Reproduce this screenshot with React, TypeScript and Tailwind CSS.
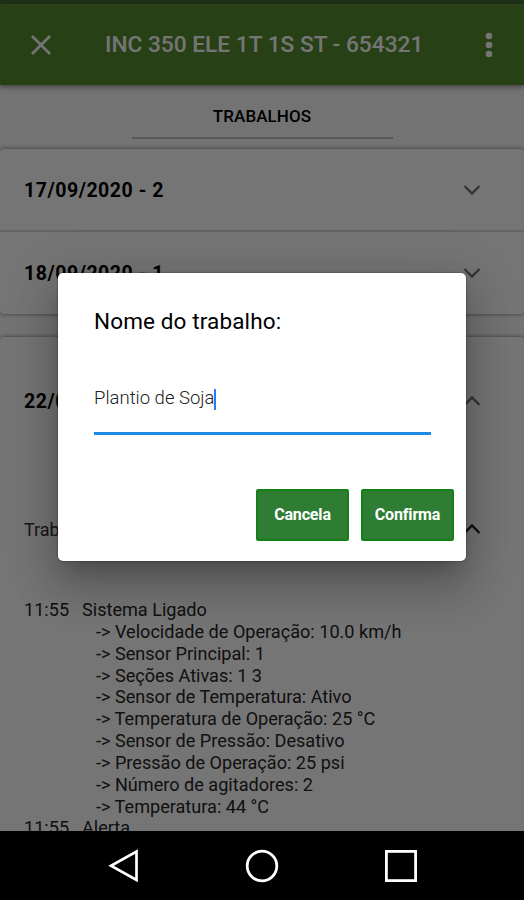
import type { ReactNode } from "react";

const readings = [
  "Velocidade de Operação: 10.0 km/h",
  "Sensor Principal: 1",
  "Seções Ativas: 1 3",
  "Sensor de Temperatura: Ativo",
  "Temperatura de Operação: 25 °C",
  "Sensor de Pressão: Desativo",
  "Pressão de Operação: 25 psi",
  "Número de agitadores: 2",
  "Temperatura: 44 °C",
];

function Chevron({ up = false, dark = false }: { up?: boolean; dark?: boolean }) {
  return (
    <svg
      width="18"
      height="12"
      viewBox="0 0 18 12"
      fill="none"
      strokeWidth="2.4"
      className={dark ? "stroke-[#222]" : "stroke-[#757575]"}
    >
      <path d={up ? "M1.5 10 9 2.5 16.5 10" : "M1.5 2 9 9.5 16.5 2"} />
    </svg>
  );
}

function PanelHeader({ children, up, className }: { children: ReactNode; up?: boolean; className: string }) {
  return (
    <div className={`flex items-center justify-between pl-6 pr-[43px] ${className}`}>
      <span className="pt-[2px] text-[19.5px] font-bold tracking-[0.53px] text-black">{children}</span>
      <Chevron up={up} />
    </div>
  );
}

function ActionButton({ children }: { children: ReactNode }) {
  return (
    <button className="flex h-[52px] w-[93px] items-center justify-center rounded-[2px] border-2 border-[#138018] bg-[#2e7d32] text-[16px] font-bold tracking-[-0.15px] text-white">
      {children}
    </button>
  );
}

export default function App() {
  return (
    <div className="relative flex h-[900px] w-[524px] flex-col overflow-hidden bg-[#fafafa] font-['Roboto',sans-serif]">
      <div className="h-1 shrink-0 bg-[#426b35]" />
      <header className="z-10 flex h-[81px] shrink-0 items-center bg-[#558b2f] pl-[31px] pr-[31px] text-white shadow-[0_2px_5px_rgba(0,0,0,0.45)]">
        <svg width="20" height="20" viewBox="0 0 20 20" fill="none" stroke="currentColor" strokeWidth="2.7">
          <path d="M1 1 19 19M19 1 1 19" />
        </svg>
        <h1 className="ml-[54px] flex-1 whitespace-nowrap pt-px text-[22.7px] font-medium">INC 350 ELE 1T 1S ST - 654321</h1>
        <svg width="8" height="26" viewBox="0 0 8 26" fill="currentColor">
          <circle cx="4" cy="4" r="3.3" />
          <circle cx="4" cy="13" r="3.3" />
          <circle cx="4" cy="22" r="3.3" />
        </svg>
      </header>

      <div className="flex h-[64px] shrink-0 justify-center">
        <div className="flex h-[54px] w-[261px] items-center justify-center border-b-2 border-[#bdbdbd] pt-[12px] text-[17px] font-medium tracking-[0.1px] text-black">
          TRABALHOS
        </div>
      </div>

      <section className="shrink-0 rounded-[4px] bg-white shadow-[0_0_4px_rgba(0,0,0,0.5)]">
        <PanelHeader className="h-[83px] border-b-2 border-[#d9d9d9]">17/09/2020 - 2</PanelHeader>
        <PanelHeader className="h-[82px]">18/09/2020 - 1</PanelHeader>
      </section>

      <section className="mt-[23px] flex min-h-0 flex-1 flex-col overflow-hidden rounded-t-[4px] bg-white shadow-[0_0_4px_rgba(0,0,0,0.5)]">
        <PanelHeader up className="h-[128px] shrink-0">22/09/2020 - 1</PanelHeader>
        <div className="flex h-[128px] shrink-0 items-center justify-between pl-6 pr-[43px] text-[18px] text-[#333]">
          Trabalho 1
          <Chevron up dark />
        </div>
        <div className="shrink-0 pl-6 pt-[6px] text-[18.1px] leading-[21.85px] text-[#262626]">
          <div className="flex">
            <span className="w-[58px]">11:55</span>
            <span>Sistema Ligado</span>
          </div>
          {readings.map((reading) => (
            <div key={reading} className="whitespace-nowrap pl-[72px]">
              -&gt; {reading}
            </div>
          ))}
          <div className="flex">
            <span className="w-[58px]">11:55</span>
            <span>Alerta</span>
          </div>
        </div>
      </section>

      <nav className="z-30 flex h-[69px] shrink-0 items-center justify-between bg-black pl-[108px] pr-[106px]">
        <svg width="32" height="34" viewBox="0 0 32 34" fill="none" stroke="white" strokeWidth="2.7">
          <path d="M28.5 2.5V31L3 16.75Z" />
        </svg>
        <svg width="34" height="34" viewBox="0 0 34 34" fill="none" stroke="white" strokeWidth="2.8">
          <circle cx="17" cy="17" r="14.8" />
        </svg>
        <svg width="34" height="34" viewBox="0 0 34 34" fill="none" stroke="white" strokeWidth="2.8">
          <rect x="2.4" y="2.4" width="29.2" height="29.2" />
        </svg>
      </nav>

      <div className="absolute inset-x-0 top-0 z-20 h-[831px] overflow-hidden bg-black/54">
        <div
          role="dialog"
          className="absolute left-[58px] top-[273px] flex h-[288px] w-[408px] flex-col rounded-[5px] bg-white shadow-[0_14px_20px_-8px_rgba(0,0,0,0.2),0_28px_44px_4px_rgba(0,0,0,0.14),0_10px_50px_10px_rgba(0,0,0,0.12),0_0_2px_rgba(0,0,0,0.6)]"
        >
          <h2 className="ml-9 mt-[32px] text-[22.5px] leading-8 tracking-[0.13px] text-black">Nome do trabalho:</h2>
          <div className="ml-9 mr-[35px] mt-[29px] box-content flex h-[66px] items-center border-b-[3px] border-[#1e88e5] text-[18.5px] text-[#222]">
            <span className="whitespace-nowrap font-light">Plantio de Soja</span>
            <span className="h-[21px] w-[2px] bg-[#2979ff]" />
          </div>
          <div className="mr-3 mt-[54px] flex justify-end gap-[12px]">
            <ActionButton>Cancela</ActionButton>
            <ActionButton>Confirma</ActionButton>
          </div>
        </div>
      </div>
    </div>
  );
}
